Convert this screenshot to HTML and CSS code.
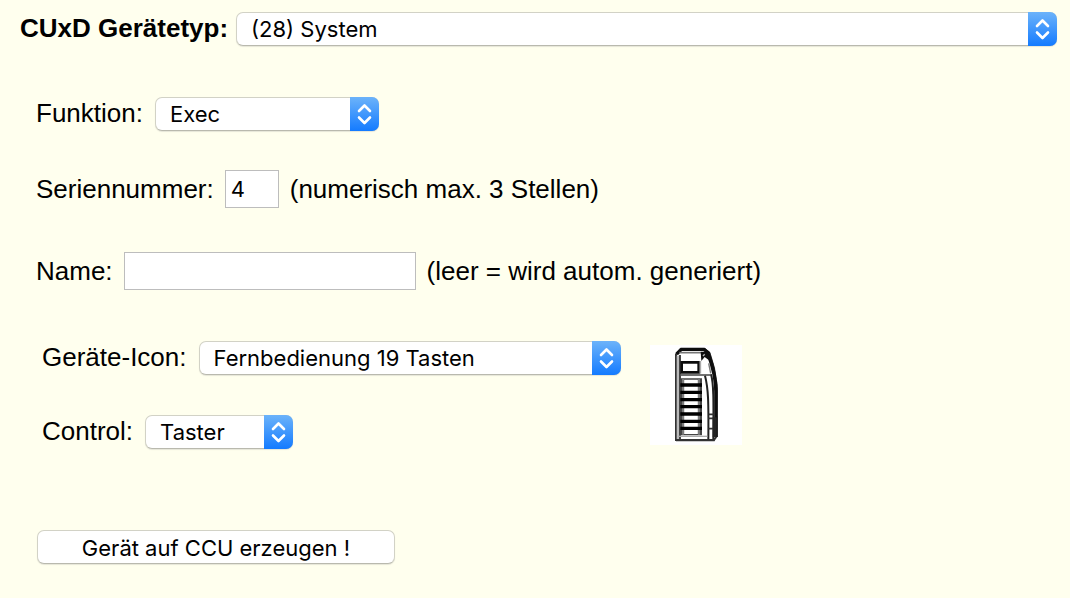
FILE: index.html
```html
<!DOCTYPE html>
<html lang="de">
<head>
<meta charset="utf-8">
<title>CUxD Gerätetyp</title>
<link rel="stylesheet" href="styles.css">
</head>
<body>
<svg class="defs" aria-hidden="true">
  <symbol id="chevrons" viewBox="0 0 29 34">
    <path d="M9 14 14.500 8.500 20 14M9 20.500 14.500 26 20 20.500" fill="none" stroke="#fff" stroke-width="2.600" stroke-linecap="round" stroke-linejoin="round"/>
  </symbol>
</svg>
<form class="device-form">
  <div class="row select-row type-row">
    <label class="strong" for="type">CUxD Gerätetyp:</label>
    <span class="select select-fill">
      <select id="type"><option>(28) System</option></select>
      <svg class="cap" aria-hidden="true"><use href="#chevrons"/></svg>
    </span>
  </div>
  <div class="settings">
    <div class="row select-row">
      <label for="function">Funktion:</label>
      <span class="select select-function">
        <select id="function"><option>Exec</option></select>
        <svg class="cap" aria-hidden="true"><use href="#chevrons"/></svg>
      </span>
    </div>
    <div class="row input-row serial-row">
      <label for="serial">Seriennummer:</label>
      <input class="serial" id="serial" type="text" maxlength="3" value="4">
      <span>(numerisch max. 3 Stellen)</span>
    </div>
    <div class="row input-row name-row">
      <label for="name">Name:</label>
      <input class="name" id="name" type="text">
      <span>(leer = wird autom. generiert)</span>
    </div>
    <div class="appearance">
      <div class="choices">
        <div class="row select-row">
          <label for="icon">Geräte-Icon:</label>
          <span class="select select-icon">
            <select id="icon"><option>Fernbedienung 19 Tasten</option></select>
            <svg class="cap" aria-hidden="true"><use href="#chevrons"/></svg>
          </span>
        </div>
        <div class="row select-row">
          <label for="control">Control:</label>
          <span class="select select-control">
            <select id="control"><option>Taster</option></select>
            <svg class="cap" aria-hidden="true"><use href="#chevrons"/></svg>
          </span>
        </div>
      </div>
      <svg class="remote" viewBox="28 30 276 300" role="img" aria-label="Fernbedienung">
        <defs>
          <filter id="soft"><feGaussianBlur stdDeviation="1.500"/></filter>
        </defs>
        <g filter="url(#soft)">
        <path d="M106 315V58L120 42H192L207 56 220 100 228 160 227 305 220 315Z" fill="#fff" stroke="#333" stroke-width="6"/>
        <path d="M112 62V312" stroke="#bbb" stroke-width="8"/>
        <path d="M118 60V312" stroke="#222" stroke-width="5"/>
        <path d="M108 57 122 43H190L206 56" fill="none" stroke="#111" stroke-width="10"/>
        <path d="M116 53H182" stroke="#777" stroke-width="5"/>
        <path d="M180 50H200L205 76 192 66 182 78Z" fill="#111"/>
        <path d="M187 63l5-5" stroke="#bbb" stroke-width="4"/>
        <path d="M203 56C214 88 227 130 226 170V306" fill="none" stroke="#111" stroke-width="11"/>
        <path d="M204 85 210 115" stroke="#777" stroke-width="4"/>
        <path d="M123 82H174V112H123Z" fill="#fff" stroke="#111" stroke-width="8"/>
        <path d="M179 78V116" stroke="#aaa" stroke-width="5"/>
        <path d="M118 120H210" stroke="#555" stroke-width="5"/>
        <path d="M193 122C203 160 204 200 203 314" fill="none" stroke="#222" stroke-width="6"/>
        <path d="M211 118C219 145 219 190 218 314" fill="none" stroke="#222" stroke-width="6"/>
        <path d="M204 238H219M203 250H219M203 281H226" stroke="#333" stroke-width="5"/>
        <path d="M222 247V306" stroke="#222" stroke-width="12"/>
        <path d="M121 132H182V299H121Z" fill="#fff" stroke="#444" stroke-width="4"/>
        <path d="M125 132V299M177 132V299" stroke="#444" stroke-width="11"/>
        <path d="M127 132V299M175 132V299" stroke="#999" stroke-width="4"/>
        <path d="M119 150H184M119 172H184M119 194H184M119 215H184M119 237H184M119 259H184M119 280H184" stroke="#000" stroke-width="10"/>
        <path d="M112 304H200" stroke="#aaa" stroke-width="4"/>
        <path d="M106 316H222" stroke="#333" stroke-width="6"/>
        </g>
      </svg>
    </div>
    <button class="create" type="button">Gerät auf CCU erzeugen !</button>
  </div>
</form>
</body>
</html>
```
FILE: styles.css
```css
* {
  box-sizing: border-box;
}

body {
  margin: 0;
  background: #ffffee;
  color: #000;
  font: 26px/30px "Liberation Sans", Arial, sans-serif;
}

.defs {
  display: none;
}

.device-form {
  padding: 12px 13px 32px 20px;
}

.row {
  display: flex;
  align-items: center;
  gap: 12px;
  white-space: nowrap;
}

.select-row label {
  padding-bottom: 2px;
}

.type-row {
  gap: 8px;
}

.strong {
  font-weight: bold;
}

.settings {
  padding: 51px 0 0 16px;
}

.input-row {
  gap: 11px;
}

.serial-row {
  margin-top: 39px;
}

.name-row {
  margin-top: 44px;
}

.select {
  position: relative;
  display: block;
  height: 34px;
}

.select-fill {
  flex: 1;
}

.select-function {
  width: 224px;
}

.select-icon {
  width: 422px;
}

.select-control {
  width: 148px;
}

select,
input,
.create {
  margin: 0;
  background: #fff;
  color: #000;
  font: 22px/28px Inter, sans-serif;
}

select,
.create {
  height: 34px;
  border: 1px solid #d2d2c6;
  border-bottom-color: #b9b9ae;
  border-radius: 7px;
  box-shadow: 0 1px 1px #e6e6d8;
}

select {
  display: block;
  width: 100%;
  padding: 0 36px 0 14px;
  appearance: none;
}

.cap {
  position: absolute;
  top: 0;
  right: 0;
  width: 29px;
  height: 34px;
  border-radius: 0 7px 7px 0;
  background: linear-gradient(#6cb3fa, #147bff);
  pointer-events: none;
}

input {
  height: 38px;
  padding: 2px 5px;
  border: 1px solid #bdbdbd;
  border-radius: 0;
}

.serial {
  width: 54px;
}

.name {
  width: 292px;
}

.appearance {
  display: flex;
  align-items: center;
  gap: 29px;
  margin-top: 51px;
  padding-left: 6px;
}

.choices {
  display: grid;
  gap: 40px;
}

.remote {
  width: 92px;
  height: 100px;
  background: #fff;
}

.create {
  display: block;
  width: 358px;
  margin: 81px 0 0 1px;
  padding: 2px 0 0;
}
```
